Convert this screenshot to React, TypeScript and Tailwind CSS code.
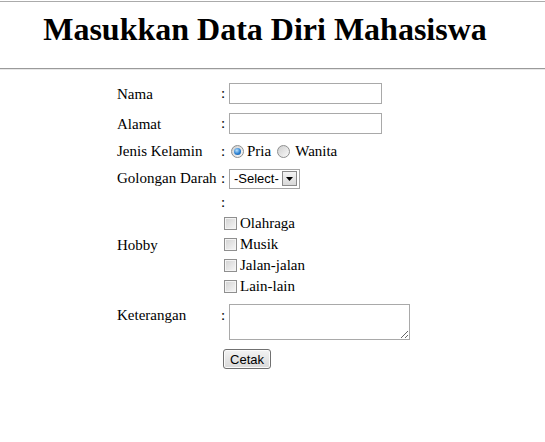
const hobbies = ["Olahraga", "Musik", "Jalan-jalan", "Lain-lain"];

function Radio({ checked }: { checked?: boolean }) {
  return (
    <span className="w-[13px] h-[13px] rounded-full border border-[#8e8f8f] bg-gradient-to-br from-[#cfcfcf] to-[#fafafa] flex items-center justify-center shrink-0">
      {checked && (
        <span className="w-[7px] h-[7px] rounded-full bg-[radial-gradient(circle_at_40%_35%,#b9e2ff,#2a7fd0_55%,#0f4f96)]" />
      )}
    </span>
  );
}

function Checkbox() {
  return (
    <span className="w-[13px] h-[13px] border border-[#8f8f8f] bg-gradient-to-br from-[#d2d2d2] to-[#f7f7f7] shrink-0 shadow-[inset_0_0_0_1px_#f4f4f4]" />
  );
}

function Colon({ w = "w-[8px]" }: { w?: string }) {
  return <span className={`${w} shrink-0`}>:</span>;
}

export default function App() {
  return (
    <div className="w-[545px] h-[442px] overflow-hidden bg-white text-black font-['Liberation_Serif',serif]">
      <div className="mt-px h-px bg-[#ababab]" />
      <h1 className="mt-[9px] w-[530px] text-center text-[32px] font-bold leading-[37px]">
        Masukkan Data Diri Mahasiswa
      </h1>
      <div className="mt-[20px] h-px bg-[#9a9a9a]" />
      <div className="h-px bg-[#e8e8e8]" />

      <div className="ml-[117px] pt-[13px] flex flex-col text-[15px] leading-[21px]">
        <div className="flex items-center h-[21px]">
          <span className="w-[104px] pt-[2px]">Nama</span>
          <Colon />
          <input type="text" className="w-[153px] h-[21px] border border-[#a9a9a9] bg-white" />
        </div>

        <div className="mt-[9px] flex items-center h-[21px]">
          <span className="w-[104px] pt-[2px]">Alamat</span>
          <Colon />
          <input type="text" className="w-[153px] h-[21px] border border-[#a9a9a9] bg-white" />
        </div>

        <div className="mt-[7px] flex items-center h-[21px]">
          <span className="w-[104px]">Jenis Kelamin</span>
          <Colon w="w-[10px]" />
          <Radio checked />
          <span className="ml-[3px]">Pria</span>
          <span className="ml-[6px] flex"><Radio /></span>
          <span className="ml-[5px]">Wanita</span>
        </div>

        <div className="mt-[6px] flex items-center h-[21px]">
          <span className="w-[104px]">Golongan Darah</span>
          <Colon />
          <div className="w-[71px] h-[20px] border border-[#a5a5a5] bg-white flex items-center">
            <span className="flex-1 min-w-0 overflow-hidden whitespace-nowrap pl-[4px] text-[13px] leading-none font-['Liberation_Sans',sans-serif]">-Select-</span>
            <span className="shrink-0 mr-[2px] w-[15px] h-[15px] border border-[#8a8a8a] bg-gradient-to-b from-[#f4f4f4] to-[#d8d8d8] flex items-center justify-center">
              <svg width="7" height="4" viewBox="0 0 7 4">
                <path d="M0 0h7L3.5 4z" fill="#000" />
              </svg>
            </span>
          </div>
        </div>

        <div className="mt-[3px] flex items-center">
          <span className="w-[104px] pt-[2px]">Hobby</span>
          <div className="flex flex-col">
            <span className="h-[21px]">:</span>
            {hobbies.map((h) => (
              <div key={h} className="h-[21px] flex items-center">
                <span className="ml-[3px] flex"><Checkbox /></span>
                <span className="ml-[3px]">{h}</span>
              </div>
            ))}
          </div>
        </div>

        <div className="mt-[7px] flex items-start">
          <span className="w-[104px] pt-[1px]">Keterangan</span>
          <span className="w-[8px] pt-[1px]">:</span>
          <textarea className="w-[181px] h-[36px] border border-[#a9a9a9] bg-white" />
        </div>

        <div className="mt-[9px] flex">
          <span className="w-[104px]" />
          <button className="ml-[2px] w-[48px] h-[20px] rounded-[3px] border border-[#707070] bg-gradient-to-b from-[#f3f3f3] to-[#d9d9d9] shadow-[inset_0_0_0_1px_#fbfbfb] text-[13px] leading-none font-['Liberation_Sans',sans-serif] text-black">
            Cetak
          </button>
        </div>
      </div>
    </div>
  );
}
